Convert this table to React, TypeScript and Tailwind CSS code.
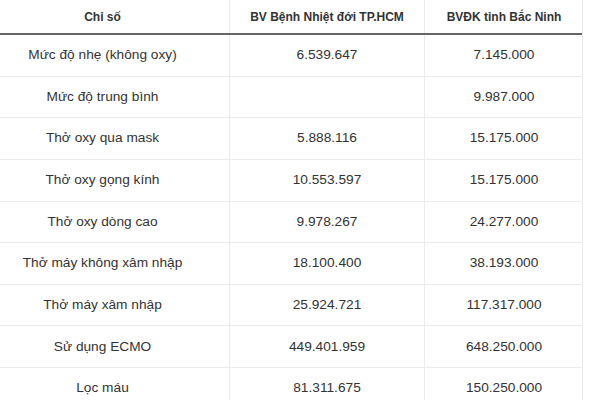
import React from "react";

const rows: [string, string, string][] = [
  ["Mức độ nhẹ (không oxy)", "6.539.647", "7.145.000"],
  ["Mức độ trung bình", "", "9.987.000"],
  ["Thở oxy qua mask", "5.888.116", "15.175.000"],
  ["Thở oxy gọng kính", "10.553.597", "15.175.000"],
  ["Thở oxy dòng cao", "9.978.267", "24.277.000"],
  ["Thở máy không xâm nhập", "18.100.400", "38.193.000"],
  ["Thở máy xâm nhập", "25.924.721", "117.317.000"],
  ["Sử dụng ECMO", "449.401.959", "648.250.000"],
  ["Lọc máu", "81.311.675", "150.250.000"],
];

export default function App() {
  return (
    <div
      className="w-[600px] h-[400px] overflow-hidden bg-white text-[#333]"
      style={{ fontFamily: '"Liberation Sans", Arial, sans-serif' }}
    >
      <div className="w-[607px] -ml-[24px] border-r border-[#ececec]">
        <div className="grid grid-cols-[254px_195px_158px] h-[35px] border-b-2 border-[#666] text-[12px] font-bold">
          <div className="flex items-center justify-center border-r border-[#ececec] pt-px">Chỉ số</div>
          <div className="flex items-center justify-center border-r border-[#ececec] pt-px">BV Bệnh Nhiệt đới TP.HCM</div>
          <div className="flex items-center justify-center pt-px">BVĐK tỉnh Bắc Ninh</div>
        </div>
        {rows.map((r, i) => (
          <div
            key={i}
            className="grid grid-cols-[254px_195px_158px] h-[41.65px] border-b border-[#ececec] text-[13.7px]"
          >
            <div className="flex items-center justify-center border-r border-[#ececec]">{r[0]}</div>
            <div className="flex items-center justify-center border-r border-[#ececec]">{r[1]}</div>
            <div className="flex items-center justify-center">{r[2]}</div>
          </div>
        ))}
      </div>
    </div>
  );
}
